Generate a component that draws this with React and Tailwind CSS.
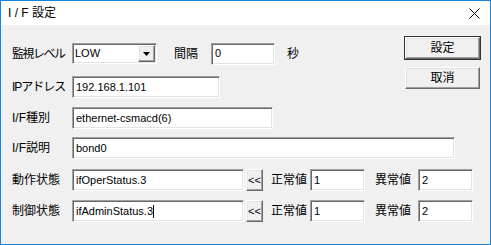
import React from 'react';

// 凹んだ入力欄（クラシック Windows 風）
const sunken =
  "border border-t-[#a0a0a0] border-l-[#a0a0a0] border-b-white border-r-white bg-white shadow-[inset_1px_1px_0_#696969,inset_-1px_-1px_0_#e3e3e3]";

// 盛り上がったボタン
const raised =
  "border border-t-white border-l-white border-b-[#696969] border-r-[#696969] bg-[#f0f0f0] shadow-[inset_-1px_-1px_0_#a0a0a0,inset_1px_1px_0_#e3e3e3]";

function Field({ value, className, caret }) {
  return (
    <div className={`${sunken} h-[22px] flex items-center pl-[3px] text-[11px] text-black overflow-hidden ${className}`}>
      <span className="whitespace-nowrap">{value}</span>
      {caret && <span className="inline-block w-px h-[13px] bg-black"></span>}
    </div>
  );
}

function Label({ children, className = "" }) {
  return <div className={`w-[60px] shrink-0 text-[12px] leading-none text-black ${className}`}>{children}</div>;
}

function StatusRow({ label, value, caret, className }) {
  return (
    <div className={`flex items-center h-[22px] ${className}`}>
      <Label>{label}</Label>
      <Field value={value} caret={caret} className="w-[172px]" />
      <button className={`${raised} ml-[2px] w-[17px] h-[22px] flex items-center justify-center text-[11px] leading-none text-black`}>
        &lt;&lt;
      </button>
      <div className="ml-[8px] w-[36px] text-[12px] leading-none">正常値</div>
      <Field value="1" className="ml-[3px] w-[55px]" />
      <div className="ml-[10px] w-[36px] text-[12px] leading-none">異常値</div>
      <Field value="2" className="ml-[7px] w-[55px]" />
    </div>
  );
}

export default function App() {
  return (
    <div className="w-[491px] h-[245px] border border-[#1883d7] bg-[#f0f0f0] flex flex-col font-['Liberation_Sans','Noto_Sans_CJK_JP',sans-serif] text-black overflow-hidden">
      {/* タイトルバー */}
      <div className="h-[24px] bg-white flex items-center pl-[7px] pr-[10px] shrink-0">
        <span className="text-[12px] leading-none">I / F 設定</span>
        <svg className="ml-auto" width="11" height="11" viewBox="0 0 11 11">
          <path d="M0.5 0.5 L10.5 10.5 M10.5 0.5 L0.5 10.5" stroke="#000" strokeWidth="1" />
        </svg>
      </div>

      {/* 本体 */}
      <div className="flex flex-col pl-[11px]">
        <div className="flex items-start">
          <div className="flex flex-col pt-[18px]">
            {/* 監視レベル */}
            <div className="flex items-center h-[21px]">
              <Label className="tracking-[-1.5px]">監視レベル</Label>
              <div className={`${sunken} w-[85px] h-[21px] flex items-center pl-[2px] text-[11px]`}>
                <span>LOW</span>
                <div className={`${raised} ml-auto mr-[1px] w-[17px] h-[17px] flex items-center justify-center`}>
                  <svg width="7" height="4" viewBox="0 0 7 4">
                    <path d="M0 0 H7 L3.5 4 Z" fill="#000" />
                  </svg>
                </div>
              </div>
              <div className="ml-[17px] w-[24px] text-[12px] leading-none">間隔</div>
              <Field value="0" className="ml-[13px] w-[64px] h-[21px]" />
              <div className="ml-[12px] text-[12px] leading-none">秒</div>
            </div>
            {/* IPアドレス */}
            <div className="flex items-center h-[22px] mt-[12px]">
              <Label className="tracking-[-1px]">IPアドレス</Label>
              <Field value="192.168.1.101" className="w-[148px]" />
            </div>
          </div>
          <div className="ml-auto mr-[10px] pt-[12px] flex flex-col gap-[8px]">
            <button className={`${raised} w-[75px] h-[22px] outline outline-1 outline-[#333] -outline-offset-0 text-[12px] leading-none`}>
              設定
            </button>
            <button className={`${raised} w-[75px] h-[22px] text-[12px] leading-none`}>取消</button>
          </div>
        </div>

        <div className="flex items-center h-[22px] mt-[9px]">
          <Label>I/F種別</Label>
          <Field value="ethernet-csmacd(6)" className="w-[201px]" />
        </div>
        <div className="flex items-center h-[22px] mt-[8px]">
          <Label>I/F説明</Label>
          <Field value="bond0" className="w-[383px]" />
        </div>

        <StatusRow label="動作状態" value="ifOperStatus.3" className="mt-[10px]" />
        <StatusRow label="制御状態" value="ifAdminStatus.3" caret className="mt-[9px]" />
      </div>
    </div>
  );
}
